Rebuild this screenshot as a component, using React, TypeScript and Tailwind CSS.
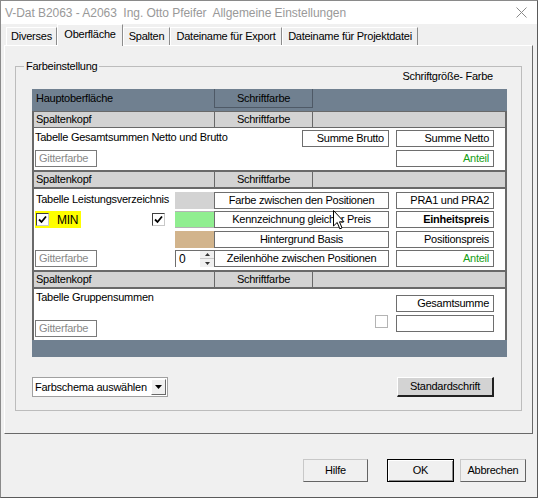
import React from 'react';

const GRID = 'grid grid-cols-[140px_39px_175px_7px_98px] h-[17px]';

function Box({
  children,
  center,
  bold,
  green,
  className = '',
}: {
  children?: React.ReactNode;
  center?: boolean;
  bold?: boolean;
  green?: boolean;
  className?: string;
}) {
  return (
    <div
      className={`h-[17px] bg-white border border-[#6e6e6e] flex items-center whitespace-nowrap px-[4px] ${
        center ? 'justify-center' : 'justify-end'
      } ${bold ? 'font-bold' : ''} ${green ? 'text-[#169e16]' : 'text-black'} ${className}`}
    >
      {children}
    </div>
  );
}

function Gitter() {
  return (
    <div className="w-[62px] h-[17px] bg-white border border-[#7a7a7a] flex items-center pl-[3px] text-[#8a8a8a]">
      Gitterfarbe
    </div>
  );
}

function Check({ checked, light }: { checked?: boolean; light?: boolean }) {
  return (
    <div
      className={`w-[13px] h-[13px] bg-white flex items-center justify-center border ${
        light ? 'border-[#b4b4b4]' : 'border-t-[#404040] border-l-[#404040] border-r-[#c8c8c8] border-b-[#c8c8c8]'
      }`}
    >
      {checked && (
        <svg width="9" height="9" viewBox="0 0 9 9">
          <path d="M1 4.5 L3.5 7 L8 1.5" fill="none" stroke="#000" strokeWidth="1.8" />
        </svg>
      )}
    </div>
  );
}

function Spaltenkopf({ thin }: { thin?: boolean }) {
  return (
    <div
      className={`${thin ? 'h-[17px] border-y' : 'h-[19px] border-y-2'} border-x-2 border-[#696969] bg-[#d3d3d3] flex`}
    >
      <div className="w-[180px] pl-[2px] flex items-center">Spaltenkopf</div>
      <div className="w-[99px] border-x border-[#696969] flex items-center justify-center">Schriftfarbe</div>
    </div>
  );
}

function Tab({ label, w, active }: { label: string; w: string; active?: boolean }) {
  return (
    <div
      className={`${w} flex items-center justify-center border-t border-l border-white border-r border-r-[#8c8c8c] ${
        active ? 'h-[22px] -mb-[1px] z-10 bg-[#f0f0f0] pb-[3px]' : 'h-[18px]'
      }`}
    >
      {label}
    </div>
  );
}

function Button({ label, w, def, className = '' }: { label: string; w: string; def?: boolean; className?: string }) {
  return (
    <div
      className={`${w} h-[23px] flex items-center justify-center bg-[#f0f0f0] border ${
        def
          ? 'border-black shadow-[inset_1px_1px_0_#fff,inset_-1px_-1px_0_#8c8c8c]'
          : 'border-t-[#c8c8c8] border-l-[#c8c8c8] border-r-[#646464] border-b-[#646464]'
      } ${className}`}
    >
      {label}
    </div>
  );
}

export default function App() {
  return (
    <div className="w-[538px] h-[498px] bg-[#f0f0f0] border border-[#8a8a8a] border-r-[#5a5a5a] border-b-[#5a5a5a] flex flex-col font-['Liberation_Sans',Arial,sans-serif] text-[11px] tracking-[-0.25px] text-black overflow-hidden">
      {/* title bar */}
      <div className="h-[23px] bg-white flex items-center justify-between pl-[4px] pr-[10px] shrink-0">
        <span className="text-[12px] text-[#999] tracking-[-0.05px] whitespace-pre">
          V-Dat B2063 - A2063  Ing. Otto Pfeifer  Allgemeine Einstellungen
        </span>
        <svg width="11" height="11" viewBox="0 0 11 11">
          <path d="M0.5 0.5 L10.5 10.5 M10.5 0.5 L0.5 10.5" stroke="#8a8a8a" strokeWidth="1" />
        </svg>
      </div>

      {/* tabs */}
      <div className="h-[21px] flex items-end pl-[5px] shrink-0 relative">
        <Tab label="Diverses" w="w-[51px]" />
        <Tab label="Oberfläche" w="w-[66px]" active />
        <Tab label="Spalten" w="w-[47px]" />
        <Tab label="Dateiname für Export" w="w-[112px]" />
        <Tab label="Dateiname für Projektdatei" w="w-[136px]" />
      </div>

      {/* tab panel */}
      <div className="ml-[3px] w-[529px] h-[389px] shrink-0 border border-t-white border-l-white border-r-[#696969] border-b-[#696969] pt-[20px] pl-[10px]">
        <div className="relative w-[507px] h-[345px] border border-[#bcbcbc]">
          <span className="absolute -top-[8px] left-[8px] px-[2px] bg-[#f0f0f0] leading-[14px]">Farbeinstellung</span>

          <div className="pt-[2px] pl-[16px]">
            <div className="w-[475px] h-[14px] leading-[14px] flex justify-end pr-[14px]">Schriftgröße- Farbe</div>

            {/* table */}
            <div className="w-[475px] mt-[6px] flex flex-col">
              <div className="h-[22px] bg-[#708090] flex">
                <div className="w-[182px] h-[19px] pl-[4px] flex items-center">Hauptoberfläche</div>
                <div className="w-[99px] h-[19px] border-x border-b border-[#4e5966] flex items-center justify-center">
                  Schriftfarbe
                </div>
              </div>

              <Spaltenkopf thin />

              <div className="h-[42px] bg-white border-x-2 border-[#696969] pl-[1px] pt-[2px] flex flex-col gap-[3px]">
                <div className={GRID}>
                  <div className="col-span-2 whitespace-nowrap leading-[14px]">Tabelle Gesamtsummen Netto und Brutto</div>
                  <div className="col-start-3 flex justify-end">
                    <Box className="w-[87px]">Summe Brutto</Box>
                  </div>
                  <div className="col-start-5">
                    <Box>Summe Netto</Box>
                  </div>
                </div>
                <div className={GRID}>
                  <Gitter />
                  <div className="col-start-5">
                    <Box green>Anteil</Box>
                  </div>
                </div>
              </div>

              <Spaltenkopf />

              <div className="h-[81px] bg-white border-x-2 border-[#696969] pl-[1px] flex flex-col relative">
                <div className={`${GRID} mt-[3px]`}>
                  <div className="whitespace-nowrap leading-[14px] pl-[1px]">Tabelle Leistungsverzeichnis</div>
                  <div className="bg-[#d3d3d3]" />
                  <Box center>Farbe zwischen den Positionen</Box>
                  <div />
                  <Box>PRA1 und PRA2</Box>
                </div>
                <div className={`${GRID} mt-[2px]`}>
                  <div className="flex items-center justify-between pr-[10px]">
                    <div className="w-[46px] h-[17px] bg-[#ffff00] flex items-center pl-[1px] gap-[8px]">
                      <Check checked />
                      <span className="text-[12px]">MIN</span>
                    </div>
                    <Check checked />
                  </div>
                  <div className="bg-[#90ee90] border-y border-[#b4b4b4]" />
                  <Box center>Kennzeichnung gleicher Preis</Box>
                  <div />
                  <Box bold>Einheitspreis</Box>
                </div>
                <div className={`${GRID} mt-[3px]`}>
                  <div />
                  <div className="bg-[#d2b48c]" />
                  <Box center>Hintergrund Basis</Box>
                  <div />
                  <Box>Positionspreis</Box>
                </div>
                <div className={`${GRID} mt-[2px]`}>
                  <Gitter />
                  <div className="h-[17px] bg-white border-t border-l border-[#6e6e6e] flex">
                    <div className="flex-1 pl-[3px] flex items-center text-[12px]">0</div>
                    <div className="w-[14px] flex flex-col">
                      <div className="h-[8px] bg-[#f0f0f0] border-b border-[#c8c8c8] flex items-center justify-center">
                        <svg width="5" height="3" viewBox="0 0 5 3">
                          <path d="M0 3 L2.5 0 L5 3 Z" fill="#333" />
                        </svg>
                      </div>
                      <div className="h-[8px] bg-[#f0f0f0] flex items-center justify-center">
                        <svg width="5" height="3" viewBox="0 0 5 3">
                          <path d="M0 0 L2.5 3 L5 0 Z" fill="#333" />
                        </svg>
                      </div>
                    </div>
                  </div>
                  <Box center>Zeilenhöhe zwischen Positionen</Box>
                  <div />
                  <Box green>Anteil</Box>
                </div>
                {/* mouse pointer */}
                <svg className="absolute left-[299px] top-[21px]" width="12" height="20" viewBox="0 0 12 20">
                  <path
                    d="M0.5 0.5 L0.5 16 L4.2 12.5 L6.8 18.8 L9 17.9 L6.5 11.8 L11 11.8 Z"
                    fill="#fff"
                    stroke="#000"
                    strokeWidth="1"
                  />
                </svg>
              </div>

              <Spaltenkopf />

              <div className="h-[51px] bg-white border-x-2 border-[#696969] pl-[1px] flex">
                <div className="w-[140px] flex flex-col justify-between pt-[1px] pb-[3px]">
                  <div className="whitespace-nowrap leading-[14px] pl-[1px]">Tabelle Gruppensummen</div>
                  <Gitter />
                </div>
                <div className="flex flex-col pt-[6px] gap-[3px]">
                  <div className="grid grid-cols-[39px_175px_7px_98px] h-[17px]">
                    <div className="col-start-4">
                      <Box>Gesamtsumme</Box>
                    </div>
                  </div>
                  <div className="grid grid-cols-[39px_175px_7px_98px] h-[17px]">
                    <div className="col-start-2 flex items-start justify-end pr-[1px]">
                      <Check light />
                    </div>
                    <div className="col-start-4">
                      <Box />
                    </div>
                  </div>
                </div>
              </div>

              <div className="h-[17px] bg-[#708090]" />
            </div>

            {/* bottom controls */}
            <div className="w-[462px] mt-[20px] flex justify-between">
              <div className="w-[136px] h-[20px] bg-white border border-[#a0a0a0] flex items-center pl-[2px] pr-[1px]">
                <span className="flex-1 whitespace-nowrap">Farbschema auswählen</span>
                <div className="w-[15px] h-[16px] bg-[#f0f0f0] border border-t-white border-l-white border-r-[#696969] border-b-[#696969] flex items-center justify-center">
                  <svg width="7" height="4" viewBox="0 0 7 4">
                    <path d="M0 0 L7 0 L3.5 4 Z" fill="#000" />
                  </svg>
                </div>
              </div>
              <div className="w-[97px] h-[20px] bg-[#d3d3d3] border border-t-white border-l-white border-r-2 border-b-2 border-r-[#202020] border-b-[#202020] flex items-center justify-center">
                Standardschrift
              </div>
            </div>
          </div>
        </div>
      </div>

      {/* dialog buttons */}
      <div className="mt-[25px] flex justify-end pr-[11px]">
        <Button label="Hilfe" w="w-[65px]" />
        <Button label="OK" w="w-[67px]" def className="ml-[19px]" />
        <Button label="Abbrechen" w="w-[66px]" className="ml-[6px]" />
      </div>
    </div>
  );
}
